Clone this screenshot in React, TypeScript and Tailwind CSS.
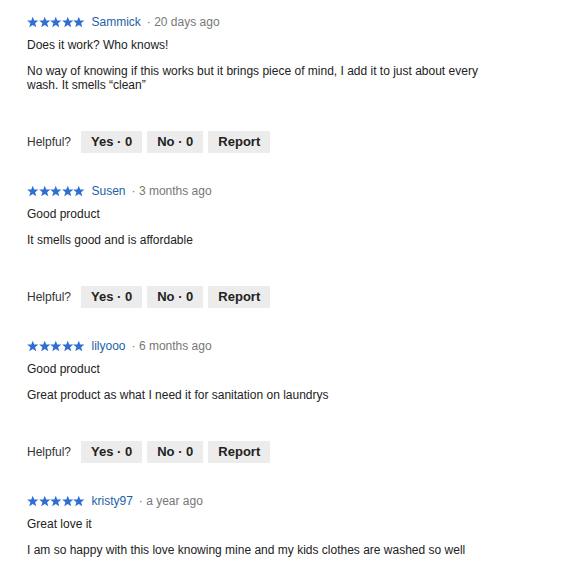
const reviews = [
  {
    name: "Sammick",
    date: "20 days ago",
    title: "Does it work? Who knows!",
    body: "No way of knowing if this works but it brings piece of mind, I add it to just about every wash. It smells \u201cclean\u201d",
  },
  { name: "Susen", date: "3 months ago", title: "Good product", body: "It smells good and is affordable" },
  {
    name: "lilyooo",
    date: "6 months ago",
    title: "Good product",
    body: "Great product as what I need it for sanitation on laundrys",
  },
  {
    name: "kristy97",
    date: "a year ago",
    title: "Great love it",
    body: "I am so happy with this love knowing mine and my kids clothes are washed so well",
  },
];

function Stars() {
  return (
    <div className="flex">
      {[0, 1, 2, 3, 4].map((i) => (
        <svg key={i} width="11.5" height="12" viewBox="0 0 24 23" className="shrink-0">
          <polygon
            points="12,0.3 15.1,8.2 23.7,8.5 16.9,13.9 19.4,22.5 12,17.5 4.6,22.5 7.1,13.9 0.3,8.5 8.9,8.2"
            fill="#2f6fd4"
          />
        </svg>
      ))}
    </div>
  );
}

export default function App() {
  return (
    <div
      className="min-h-screen bg-white px-[27px] pt-[15px] text-[12px] leading-[14px] text-[#222]"
      style={{ fontFamily: '"Liberation Sans", Arial, sans-serif' }}
    >
      {reviews.map((r, idx) => (
        <div key={r.name} className={idx > 0 ? "mt-[31px]" : ""}>
          <div className="flex h-[14px] items-center">
            <Stars />
            <span className="ml-[7px] text-[#1b5fa6]">{r.name}</span>
            <span className="ml-[6px] text-[#777]">· {r.date}</span>
          </div>
          <p className="mt-[9px]">{r.title}</p>
          <p className="mt-[12px] max-w-[460px]">{r.body}</p>
          {idx < reviews.length - 1 && (
            <div className="mt-[39px] flex h-[22px] items-center">
              <span className="mr-[10px] text-[#333]">Helpful?</span>
              <div className="flex gap-[5px]">
                {["Yes · 0", "No · 0", "Report"].map((b) => (
                  <button
                    key={b}
                    className="h-[22px] bg-[#ececec] px-[10px] text-[13px] font-bold text-[#222]"
                  >
                    {b}
                  </button>
                ))}
              </div>
            </div>
          )}
        </div>
      ))}
    </div>
  );
}
